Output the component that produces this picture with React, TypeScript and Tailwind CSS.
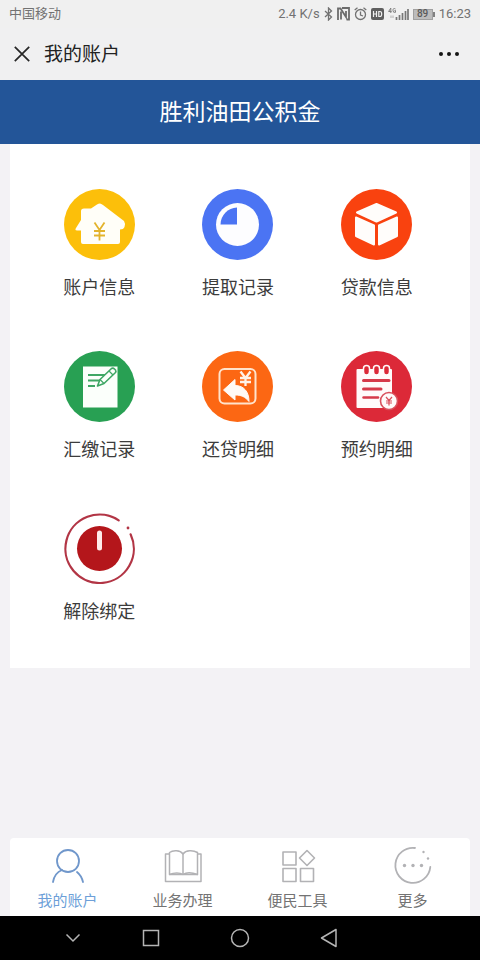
import type { ReactNode } from "react";

const serviceIcon = "size-[71px]";

function HouseIcon() {
  return (
    <svg viewBox="0 0 71 71" className={serviceIcon} aria-hidden="true">
      <circle cx="35.5" cy="35.5" r="35.5" fill="#fcbf0a" />
      <path
        d="M36 14.5 Q37 14.5 39 16 L60 32 Q61.500 34 60.500 38 Q59.500 40.500 56 40.500 V53 Q56 55 54 55 H19 Q17 55 17 53 V41.500 H13 Q10.500 41.500 12 39 L17 31 V22 Q17 19.500 20 19.500 H27 L33 15.500 Q34.500 14.500 36 14.500 Z"
        fill="#fffef8"
      />
      <path d="M30.500 33.500 L35.500 41 L40.500 33.500 M35.500 41 V51.500 M30 42 H41 M30 46.500 H41" fill="none" stroke="#e3b32c" strokeWidth="1.8" />
    </svg>
  );
}

function PieIcon() {
  return (
    <svg viewBox="0 0 71 71" className={serviceIcon} aria-hidden="true">
      <circle cx="35.5" cy="35.5" r="35.5" fill="#4b74f3" />
      <circle cx="35.5" cy="35.5" r="21.5" fill="#fdfdff" />
      <path d="M35 18.500 V35.500 H18.500 A17 17 0 0 1 35 18.500 Z" fill="#4b74f3" />
    </svg>
  );
}

function CubeIcon() {
  return (
    <svg viewBox="0 0 71 71" className={serviceIcon} aria-hidden="true">
      <circle cx="35.5" cy="35.5" r="35.5" fill="#f9420f" />
      <g fill="#fffdfb" stroke="#fffdfb" strokeWidth="2" strokeLinejoin="round">
        <path d="M35.500 15 L55 23.500 L35.500 32.500 L16 23.500 Z" />
        <path d="M15 28.500 L33 36.500 V55.500 L15 47 Z" />
        <path d="M56 28.500 L38 36.500 V55.500 L56 47 Z" />
      </g>
    </svg>
  );
}

function NoteIcon() {
  return (
    <svg viewBox="0 0 71 71" className={serviceIcon} aria-hidden="true">
      <circle cx="35.5" cy="35.5" r="35.5" fill="#28a053" />
      <rect x="19" y="15.500" width="34.500" height="41" fill="#fbfffb" />
      <path d="M24 24 H42 M24 29.500 H37 M24 35 H31" stroke="#3fa765" strokeWidth="1.800" />
      <path d="M33.500 35 L36 28.500 L47.500 17.500 Q49 16.500 50.500 18 L51.500 19 Q52.500 20.500 51 22 L40 32.500 Z" fill="#fbfffb" stroke="#3fa765" strokeWidth="1.600" strokeLinejoin="round" />
      <path d="M36 28.500 L40 32.500 M45 20 L49 24" stroke="#3fa765" strokeWidth="1.200" />
    </svg>
  );
}

function RepayIcon() {
  return (
    <svg viewBox="0 0 71 71" className={serviceIcon} aria-hidden="true">
      <circle cx="35.5" cy="35.5" r="35.5" fill="#fc6713" />
      <rect x="17.500" y="18" width="36" height="34.500" rx="5" fill="none" stroke="#ffe3cc" strokeWidth="2" />
      <path d="M21.500 39 L33 28.500 V34.500 C42 34.500 47 41 47 50.500 C43 45.500 39 44 33 44 V49 Z" fill="#fffaf5" stroke="#fffaf5" strokeLinejoin="round" />
      <path d="M38.500 20.500 L43.500 27 L48.500 20.500 M43.500 27 V35 M38 27 H49 M38 31 H49" fill="none" stroke="#fff3e8" strokeWidth="2.300" />
    </svg>
  );
}

function NotepadIcon() {
  return (
    <svg viewBox="0 0 71 71" className={serviceIcon} aria-hidden="true">
      <circle cx="35.500" cy="35.500" r="35.500" fill="#dc2938" />
      <rect x="15.500" y="18" width="35.500" height="39" rx="1" fill="#fffafa" />
      <g fill="#dc2938" stroke="#fffafa" strokeWidth="1.500">
        <rect x="22.500" y="14.500" width="6" height="9.500" rx="3" />
        <rect x="32.500" y="14.500" width="6" height="9.500" rx="3" />
        <rect x="42.500" y="14.500" width="6" height="9.500" rx="3" />
      </g>
      <g stroke="#d63a4a" strokeWidth="3" strokeLinecap="round">
        <path d="M22.500 29.500 H48" />
        <path d="M22.500 38 H40" />
        <path d="M22.500 46.500 H37" strokeWidth="2.500" />
      </g>
      <circle cx="48" cy="50" r="8.500" fill="#fffafa" stroke="#d9505c" strokeWidth="1.600" />
      <path d="M45 46 L48 49.500 L51 46 M48 49.500 V54.500 M45 50 H51 M45 52 H51" fill="none" stroke="#d9505c" strokeWidth="1.200" />
    </svg>
  );
}

function PowerIcon() {
  return (
    <svg viewBox="0 0 71 71" className={serviceIcon} aria-hidden="true">
      <path d="M54.700 7.400 A34.200 34.200 0 1 0 66.600 21.300" fill="none" stroke="#b23545" strokeWidth="2.200" strokeLinecap="round" />
      <circle cx="64" cy="15" r="1.400" fill="#b23545" />
      <circle cx="35.500" cy="35.500" r="22.500" fill="#b4161b" />
      <path d="M35.500 20 V35" stroke="#ffeceb" strokeWidth="5" strokeLinecap="round" />
    </svg>
  );
}

const tabIcon = "size-10 fill-none";

function UserIcon() {
  return (
    <svg viewBox="0 0 40 40" className={tabIcon} stroke="#7097cb" strokeWidth="1.800" strokeLinecap="round" aria-hidden="true">
      <circle cx="20" cy="15" r="11" />
      <path d="M5 36 C6 30 9 26 14 24 M29 26 C32 28.500 34 31.500 35 36" />
    </svg>
  );
}

function BookIcon() {
  return (
    <svg viewBox="0 0 40 40" className={tabIcon} stroke="#b2b2b5" strokeWidth="1.500" strokeLinejoin="round" aria-hidden="true">
      <path d="M6 8 H2.500 V35.500 H38 V8 H34.500" />
      <path d="M20 8 C17 4 10 4 6.500 6.500 V28.500 C11 26.500 17 26.500 20 28.500 C23 26.500 29 26.500 34.500 28.500 V6.500 C30 4 23 4 20 8 Z" />
      <path d="M20 8 V28.500 M6.500 28.500 H34.500" />
    </svg>
  );
}

function ToolsIcon() {
  return (
    <svg viewBox="0 0 40 40" className={tabIcon} stroke="#b2b2b5" strokeWidth="1.600" strokeLinejoin="round" aria-hidden="true">
      <rect x="5" y="6" width="13" height="13" />
      <rect x="5" y="22.500" width="13" height="13" />
      <rect x="22.500" y="22.500" width="13" height="13" />
      <path d="M29 4.500 L36.500 12 L29 19.500 L21.500 12 Z" />
    </svg>
  );
}

function MoreIcon() {
  return (
    <svg viewBox="0 0 40 40" className={tabIcon} aria-hidden="true">
      <path d="M22 2 A17.500 17.500 0 1 0 37.300 21" stroke="#b2b2b5" strokeWidth="1.800" strokeLinecap="round" />
      <g fill="#b2b2b5">
        <circle cx="30.500" cy="6" r="1.200" />
        <circle cx="35" cy="12.500" r="1.200" />
        <circle cx="11.500" cy="19.500" r="1.700" />
        <circle cx="20" cy="19.500" r="1.700" />
        <circle cx="28.500" cy="19.500" r="1.700" />
      </g>
    </svg>
  );
}

function StatusIcons() {
  return (
    <span className="flex items-center gap-1">
      <svg viewBox="0 0 9 14" className="h-[14px] w-[9px] fill-none" stroke="#727272" strokeWidth="1.300" aria-hidden="true">
        <path d="M1 4 L7.500 10 L4.500 13 V1 L7.500 4 L1 10" />
      </svg>
      <svg viewBox="0 0 13 14" className="h-[14px] w-[13px]" aria-hidden="true">
        <path d="M1 13 V1.500 H3.500 L9 10 V4" fill="none" stroke="#6c6c6c" strokeWidth="1.800" />
        <path d="M4 4.500 V12.500 M9.500 12.500 H12 V1 H5" fill="none" stroke="#6c6c6c" strokeWidth="1.800" />
      </svg>
      <svg viewBox="0 0 13 14" className="h-[14px] w-[13px] fill-none" stroke="#727272" strokeWidth="1.300" aria-hidden="true">
        <circle cx="6.500" cy="7.500" r="5" />
        <path d="M.7 3 L3.500 .8 M12.300 3 L9.500 .8 M6.500 4.500 V8 L9 9" />
      </svg>
      <svg viewBox="0 0 13 14" className="h-[14px] w-[13px]" aria-hidden="true">
        <rect width="13" height="12" y="1" rx="2" fill="#5f5f5f" />
        <path d="M2.500 4 V10 M5.500 4 V10 M2.500 7 H5.500 M7.800 4.500 V9.500 H9 Q10.700 9.500 10.700 7 Q10.700 4.500 9 4.500 Z" fill="none" stroke="#f0f0f0" strokeWidth="1.200" />
      </svg>
      <svg viewBox="0 0 21 14" className="h-[14px] w-[21px]" aria-hidden="true">
        <path d="M2.800 6 V1 L.6 4.500 H3.600 M7.500 2 Q5 .5 5 3.500 Q5 6 7.500 5.300 V3.500 H6.500" fill="none" stroke="#808080" />
        <path d="M3 8.500 V11 M5 8.500 V11" stroke="#b0b0b0" />
        <path d="M8.500 10 V13 M11.500 8 V13 M14.500 6 V13 M17.500 4 V13 M20 2 V13" stroke="#777" strokeWidth="1.700" />
      </svg>
      <span className="flex items-center">
        <span className="flex h-[11px] w-5 items-center justify-center border border-[#a0a0a0] bg-[#bcbcbc] text-[10px] font-medium leading-none text-[#5a5a5a]">89</span>
        <span className="h-[5px] w-[2px] bg-[#808080]" />
      </span>
    </span>
  );
}

const services: { label: string; icon: ReactNode }[] = [
  { label: "账户信息", icon: <HouseIcon /> },
  { label: "提取记录", icon: <PieIcon /> },
  { label: "贷款信息", icon: <CubeIcon /> },
  { label: "汇缴记录", icon: <NoteIcon /> },
  { label: "还贷明细", icon: <RepayIcon /> },
  { label: "预约明细", icon: <NotepadIcon /> },
  { label: "解除绑定", icon: <PowerIcon /> },
];

const tabs: { label: string; icon: ReactNode; active?: boolean }[] = [
  { label: "我的账户", icon: <UserIcon />, active: true },
  { label: "业务办理", icon: <BookIcon /> },
  { label: "便民工具", icon: <ToolsIcon /> },
  { label: "更多", icon: <MoreIcon /> },
];

export default function App() {
  return (
    <div className="flex min-h-screen flex-col bg-[#f3f2f5] font-[Roboto,'Noto_Sans_CJK_SC',sans-serif] text-[#3c3c3c]">
      <div className="flex h-7 items-center justify-between bg-[#f0f0f0] px-[9px] text-[13px] text-[#727272]">
        <span>中国移动</span>
        <span className="flex items-center gap-1">
          <span>2.4 K/s</span>
          <StatusIcons />
          <span>16:23</span>
        </span>
      </div>

      <div className="flex h-[52px] items-center bg-[#f0f0f1] pl-[14px] pr-5">
        <button type="button" aria-label="关闭" className="mr-[14px]">
          <svg viewBox="0 0 16 16" className="size-4" stroke="#262626" strokeWidth="1.700" aria-hidden="true">
            <path d="M.8 .8 L15.200 15.200 M15.200 .8 L.8 15.200" />
          </svg>
        </button>
        <h1 className="flex-1 pt-[2px] text-[19px] font-normal text-[#222]">我的账户</h1>
        <button type="button" aria-label="菜单">
          <svg viewBox="0 0 22 16" className="h-4 w-[22px]" fill="#151515" aria-hidden="true">
            <circle cx="3" cy="8" r="2" />
            <circle cx="11" cy="8" r="2" />
            <circle cx="19" cy="8" r="2" />
          </svg>
        </button>
      </div>

      <header className="flex h-16 items-center justify-center bg-[#235598] pt-[2px]">
        <h2 className="text-[23px] text-white">胜利油田公积金</h2>
      </header>

      <main className="flex-1 px-[10px]">
        <div className="grid grid-cols-3 gap-y-12 bg-white pb-[41px] pl-5 pr-6 pt-[45px]">
          {services.map((s) => (
            <button key={s.label} type="button" className="flex flex-col items-center gap-[13px]">
              {s.icon}
              <span className="text-[18px] leading-[30px]">{s.label}</span>
            </button>
          ))}
        </div>
      </main>

      <nav className="mx-[10px] grid grid-cols-4 rounded-t-sm bg-white pt-2">
        {tabs.map((t) => (
          <a
            key={t.label}
            href="#"
            aria-current={t.active ? "page" : undefined}
            className={`flex flex-col items-center text-[15px] leading-[30px] ${t.active ? "text-[#6d9fd8]" : "text-[#737373]"}`}
          >
            {t.icon}
            <span>{t.label}</span>
          </a>
        ))}
      </nav>

      <div className="grid h-11 grid-cols-[67fr_89fr_89fr_89fr] place-items-center bg-black pl-10 pr-[107px]">
        <button type="button" aria-label="收起">
          <svg viewBox="0 0 24 24" className="size-6 fill-none" stroke="#b5b5b5" strokeWidth="1.500" aria-hidden="true">
            <path d="M5.500 8.500 L12 15 L18.500 8.500" />
          </svg>
        </button>
        <button type="button" aria-label="最近任务">
          <svg viewBox="0 0 24 24" className="size-6 fill-none" stroke="#b5b5b5" strokeWidth="1.500" aria-hidden="true">
            <rect x="4.500" y="4.500" width="15" height="15" />
          </svg>
        </button>
        <button type="button" aria-label="主屏幕">
          <svg viewBox="0 0 24 24" className="size-6 fill-none" stroke="#b5b5b5" strokeWidth="1.500" aria-hidden="true">
            <circle cx="12" cy="12" r="8.500" />
          </svg>
        </button>
        <button type="button" aria-label="返回">
          <svg viewBox="0 0 24 24" className="size-6 fill-none" stroke="#b5b5b5" strokeWidth="1.500" strokeLinejoin="round" aria-hidden="true">
            <path d="M19 3.500 V20.500 L4.500 12 Z" />
          </svg>
        </button>
      </div>
    </div>
  );
}
